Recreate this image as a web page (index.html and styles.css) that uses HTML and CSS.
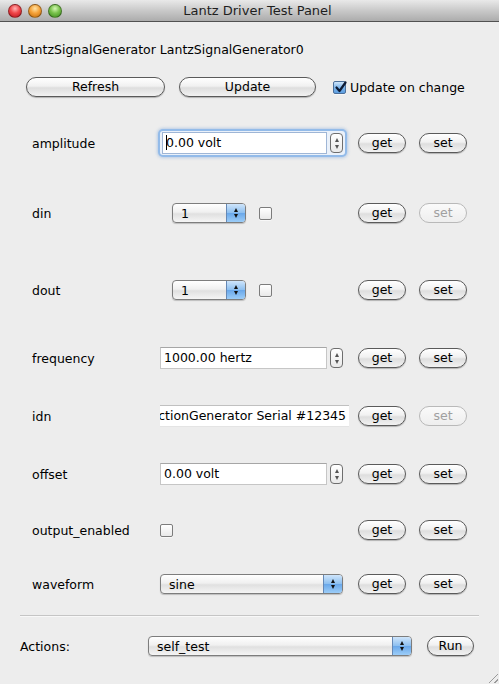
FILE: index.html
```html
<!DOCTYPE html>
<html>
<head>
<meta charset="utf-8">
<link rel="stylesheet" href="styles.css">
</head>
<body>
<div class="window">
  <div class="titlebar">
    <div class="lights">
      <span class="light red"></span>
      <span class="light orange"></span>
      <span class="light green"></span>
    </div>
    <div class="title">Lantz Driver Test Panel</div>
  </div>
  <div class="content">
    <div class="header">LantzSignalGenerator LantzSignalGenerator0</div>
    <div class="toolbar">
      <button class="btn wide">Refresh</button>
      <button class="btn wide">Update</button>
      <label class="check-label"><span class="checkbox checked"><svg width="13" height="13" viewBox="0 0 13 13"><path d="M2.5 6.5 L5.5 10 L11.5 1.5" fill="none" stroke="#0d1a33" stroke-width="2.2" stroke-linejoin="round" stroke-linecap="round"/></svg></span>Update on change</label>
    </div>

    <div class="prop r1">
      <div class="name">amplitude</div>
      <div class="field">
        <div class="spinbox focused">
          <div class="text"><span class="caret"></span>0.00 volt</div>
          <div class="stepper"><i class="up"></i><i class="down"></i></div>
        </div>
      </div>
      <button class="btn small">get</button>
      <button class="btn small">set</button>
    </div>

    <div class="prop r2">
      <div class="name">din</div>
      <div class="field indent">
        <div class="combo short"><span class="val">1</span><span class="arrows"><i class="up"></i><i class="down"></i></span></div>
        <span class="checkbox gap"></span>
      </div>
      <button class="btn small">get</button>
      <button class="btn small disabled">set</button>
    </div>

    <div class="prop r3">
      <div class="name">dout</div>
      <div class="field indent">
        <div class="combo short"><span class="val">1</span><span class="arrows"><i class="up"></i><i class="down"></i></span></div>
        <span class="checkbox gap"></span>
      </div>
      <button class="btn small">get</button>
      <button class="btn small">set</button>
    </div>

    <div class="prop r4">
      <div class="name">frequency</div>
      <div class="field">
        <div class="spinbox">
          <div class="text">1000.00 hertz</div>
          <div class="stepper"><i class="up"></i><i class="down"></i></div>
        </div>
      </div>
      <button class="btn small">get</button>
      <button class="btn small">set</button>
    </div>

    <div class="prop r5">
      <div class="name">idn</div>
      <div class="field">
        <div class="textline"><span>FunctionGenerator Serial #12345</span></div>
      </div>
      <button class="btn small">get</button>
      <button class="btn small disabled">set</button>
    </div>

    <div class="prop r6">
      <div class="name">offset</div>
      <div class="field">
        <div class="spinbox">
          <div class="text">0.00 volt</div>
          <div class="stepper"><i class="up"></i><i class="down"></i></div>
        </div>
      </div>
      <button class="btn small">get</button>
      <button class="btn small">set</button>
    </div>

    <div class="prop r7">
      <div class="name">output_enabled</div>
      <div class="field">
        <span class="checkbox"></span>
      </div>
      <button class="btn small">get</button>
      <button class="btn small">set</button>
    </div>

    <div class="prop r8">
      <div class="name">waveform</div>
      <div class="field">
        <div class="combo full"><span class="val">sine</span><span class="arrows"><i class="up"></i><i class="down"></i></span></div>
      </div>
      <button class="btn small">get</button>
      <button class="btn small">set</button>
    </div>

    <div class="separator"></div>

    <div class="actions">
      <div class="aname">Actions:</div>
      <div class="combo action"><span class="val">self_test</span><span class="arrows"><i class="up"></i><i class="down"></i></span></div>
      <button class="btn run">Run</button>
    </div>
  </div>
  <div class="grip"></div>
</div>
</body>
</html>
```
FILE: styles.css
```css
* { box-sizing: border-box; }
html, body { margin: 0; padding: 0; }
body {
  width: 499px;
  height: 684px;
  overflow: hidden;
  background: #ededed;
  font-family: "DejaVu Sans", "Liberation Sans", sans-serif;
  font-size: 12.5px;
  color: #000;
}
.window {
  position: relative;
  width: 499px;
  height: 684px;
  background: #ededed;
}
.titlebar {
  position: relative;
  height: 22px;
  background: linear-gradient(#e9e9e9, #c9c9c9 50%, #acacac);
  border-bottom: 1px solid #515151;
  display: flex;
  align-items: center;
  justify-content: center;
}
.lights {
  position: absolute;
  left: 8px;
  top: 4px;
  display: flex;
  gap: 6px;
}
.light {
  width: 14px;
  height: 14px;
  border-radius: 50%;
  border: 1px solid rgba(0,0,0,0.35);
}
.red { background: radial-gradient(circle at 50% 30%, #ffb3b3 0, #f0474a 45%, #b5121b 100%); }
.orange { background: radial-gradient(circle at 50% 30%, #ffe3a5 0, #f6a33a 45%, #c06a0a 100%); }
.green { background: radial-gradient(circle at 50% 30%, #d4f7b3 0, #79c24c 45%, #3b8a1c 100%); }
.title {
  font-size: 13px;
  color: #1e1e1e;
  padding-left: 16px;
}
.content {
  padding: 18px 0 0 0;
}
.header {
  height: 20px;
  line-height: 20px;
  padding-left: 20px;
  font-size: 12.5px;
}
.toolbar {
  margin-top: 17px;
  height: 20px;
  display: flex;
  align-items: center;
  padding-left: 26px;
}
.btn {
  font-family: inherit;
  font-size: 12.5px;
  height: 20px;
  padding: 0;
  border: 1px solid #5a5a5a;
  border-radius: 10px;
  background: linear-gradient(#ffffff, #f1f1f1 45%, #dedede 55%, #f2f2f2);
  box-shadow: 0 1px 1px rgba(0,0,0,0.25);
  color: #000;
  line-height: 18px;
}
.btn.wide { width: 139px; margin-right: 14px; }
.btn.wide + .btn.wide { width: 137px; margin-right: 17px; }
.btn.small { width: 48px; }
.btn.disabled {
  color: #a0a0a0;
  border-color: #b9b9b9;
  box-shadow: none;
  background: linear-gradient(#fafafa, #eeeeee);
}
.check-label {
  display: flex;
  align-items: center;
  gap: 4px;
}
.checkbox {
  display: inline-block;
  width: 13px;
  height: 13px;
  border: 1px solid #7c7c7c;
  border-radius: 2px;
  background: linear-gradient(#ffffff, #e9e9e9);
  box-shadow: 0 1px 0 rgba(255,255,255,0.6);
  flex: none;
  position: relative;
}
.checkbox.checked {
  background: linear-gradient(#cfe6fb, #7eb6ec 50%, #5d9ee0);
  border-color: #4b6f9a;
}
.checkbox svg { position: absolute; left: 0; top: -1px; }
.checkbox.gap { margin-left: 13px; }

.prop {
  display: grid;
  grid-template-columns: 128px 198px 61px 48px;
  align-items: center;
  padding-left: 32px;
}
.r1 { margin-top: 16px; height: 60px; }
.r2 { height: 80px; }
.r3 { height: 74px; }
.r4 { height: 62px; }
.r5 { height: 54px; }
.r6 { height: 62px; }
.r7 { height: 50px; }
.r8 { height: 58px; }
.name { font-size: 12.5px; }
.field {
  display: flex;
  align-items: center;
}
.field.indent { padding-left: 12px; }

.spinbox {
  display: flex;
  align-items: center;
  width: 185px;
  height: 24px;
  position: relative;
}
.spinbox .text {
  width: 167px;
  height: 22px;
  background: #fff;
  border: 1px solid #c6c6c6;
  border-top-color: #a6a6a6;
  line-height: 20px;
  padding-left: 3px;
  font-size: 12.5px;
  white-space: nowrap;
  position: relative;
}
.spinbox.focused {
  border-radius: 3px;
  box-shadow: 0 0 0 2px #93bbe9, 0 0 3px 3px rgba(120,165,220,0.45);
  background: #eaf1fa;
  padding-left: 2px;
}
.spinbox.focused .text {
  width: 165px;
  border-color: #9fb6d6;
}
.caret {
  display: inline-block;
  width: 1px;
  height: 15px;
  background: #000;
  vertical-align: -3px;
  margin-right: -1px;
}
.stepper {
  margin-left: 3px;
  width: 13px;
  height: 20px;
  border: 1px solid #6e6e6e;
  border-radius: 4px;
  background: linear-gradient(#ffffff, #eaeaea);
  display: flex;
  flex-direction: column;
  align-items: center;
  justify-content: center;
  gap: 3px;
}
i.up, i.down {
  display: block;
  width: 0;
  height: 0;
  border-left: 2.5px solid transparent;
  border-right: 2.5px solid transparent;
}
.stepper i.up { border-bottom: 4px solid #555; }
.stepper i.down { border-top: 4px solid #555; }

.textline {
  width: 189px;
  height: 22px;
  background: #fff;
  border-top: 1px solid #c0c0c0;
  border-bottom: 1px solid #e4e4e4;
  display: flex;
  justify-content: flex-end;
  overflow: hidden;
  white-space: nowrap;
  line-height: 20px;
  font-size: 12.5px;
  padding-right: 3px;
}
.textline span { flex: none; }

.combo {
  height: 20px;
  border: 1px solid #7d7d7d;
  border-radius: 4px;
  background: linear-gradient(#ffffff, #f0f0f0 45%, #e0e0e0 55%, #f5f5f5);
  box-shadow: 0 1px 1px rgba(0,0,0,0.2);
  display: flex;
  align-items: center;
  overflow: hidden;
  font-size: 12.5px;
}
.combo .val { flex: 1; padding-left: 8px; }
.combo .arrows {
  width: 19px;
  height: 100%;
  background: linear-gradient(#cfe5fb, #8ec0f0 48%, #6aa8ea 52%, #9ccdf8);
  border-left: 1px solid #6588b5;
  display: flex;
  flex-direction: column;
  align-items: center;
  justify-content: center;
  gap: 2px;
}
.combo .arrows i.up { border-bottom: 4px solid #111; }
.combo .arrows i.down { border-top: 4px solid #111; }
.combo.short { width: 74px; }
.combo.full { width: 183px; }
.combo.action { width: 264px; }

.separator {
  margin: 2px 20px 0 20px;
  height: 2px;
  border-top: 1px solid #c5c5c5;
  border-bottom: 1px solid #f8f8f8;
}
.actions {
  margin-top: 14px;
  height: 30px;
  display: flex;
  align-items: center;
  padding-left: 20px;
}
.aname { width: 128px; font-size: 12.5px; }
.btn.run { width: 47px; margin-left: 15px; }

.grip {
  position: absolute;
  right: 1px;
  bottom: 1px;
  width: 12px;
  height: 12px;
  background: repeating-linear-gradient(135deg, transparent 0 2px, #9a9a9a 2px 3px, transparent 3px 4px);
  clip-path: polygon(100% 0, 100% 100%, 0 100%);
}
```
